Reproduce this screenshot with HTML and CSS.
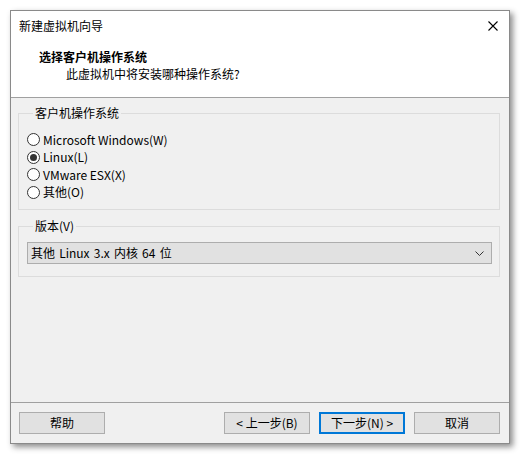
FILE: index.html
```html
<!DOCTYPE html>
<html lang="zh-CN">
<head>
<meta charset="utf-8">
<title>新建虚拟机向导</title>
<link rel="stylesheet" href="styles.css">
</head>
<body>
<div class="window">
  <div class="titlebar">
    <span class="title">新建虚拟机向导</span>
    <svg class="close" width="10" height="10" viewBox="0 0 10 10"><path d="M0.5 0.5 L9.5 9.5 M9.5 0.5 L0.5 9.5" stroke="#000" stroke-width="1.1" fill="none"/></svg>
  </div>
  <div class="header">
    <div class="heading">选择客户机操作系统</div>
    <div class="subtitle">此虚拟机中将安装哪种操作系统?</div>
  </div>
  <div class="body">
    <fieldset class="group group-os">
      <legend>客户机操作系统</legend>
      <div class="radio-row"><span class="radio"></span><span>Microsoft Windows(W)</span></div>
      <div class="radio-row"><span class="radio checked"></span><span>Linux(L)</span></div>
      <div class="radio-row"><span class="radio"></span><span>VMware ESX(X)</span></div>
      <div class="radio-row"><span class="radio"></span><span>其他(O)</span></div>
    </fieldset>
    <fieldset class="group group-ver">
      <legend>版本(V)</legend>
      <div class="select">
        <span class="select-text">其他 Linux 3.x 内核 64 位</span>
        <svg class="chev" width="9" height="5" viewBox="0 0 9 5"><path d="M0.5 0.5 L4.5 4.5 L8.5 0.5" stroke="#333" stroke-width="1" fill="none"/></svg>
      </div>
    </fieldset>
  </div>
  <div class="footer">
    <button class="btn">帮助</button>
    <span class="spacer"></span>
    <button class="btn">&lt; 上一步(B)</button>
    <button class="btn default">下一步(N) &gt;</button>
    <button class="btn">取消</button>
  </div>
</div>
</body>
</html>
```

FILE: styles.css
```css
html, body {
  margin: 0;
  background: #ffffff;
}
body {
  padding: 10px;
  font-family: "Noto Sans CJK SC", "Noto Sans", sans-serif;
  font-size: 12px;
  color: #000;
}
.window {
  width: 500px;
  height: 434px;
  box-sizing: border-box;
  border: 1px solid #8a8a8a;
  background: #fff;
  display: flex;
  flex-direction: column;
  box-shadow: 3px 3px 6px rgba(0, 0, 0, 0.45);
}
.titlebar {
  height: 30px;
  flex: none;
  display: flex;
  align-items: center;
  padding-left: 8px;
  padding-right: 11px;
}
.title {
  flex: 1;
  line-height: 16px;
}
.close {
  display: block;
}
.header {
  height: 56px;
  flex: none;
  border-bottom: 1px solid #a0a0a0;
  box-sizing: content-box;
  padding-left: 28px;
}
.heading {
  font-weight: bold;
  line-height: 16px;
  margin-top: 8px;
}
.subtitle {
  line-height: 16px;
  margin-left: 27px;
  margin-top: 1px;
}
.body {
  flex: 1;
  background: #f0f0f0;
  padding: 7px 9px 0 7px;
  display: flex;
  flex-direction: column;
}
.group {
  margin: 0;
  padding: 0;
  border: 1px solid #dcdcdc;
  min-width: 0;
}
.group legend {
  margin-left: 6px;
  padding: 0 2px;
  line-height: 16px;
}
.group-os {
  padding: 10px 0 8px 8px;
}
.radio-row {
  height: 17.5px;
  display: flex;
  align-items: center;
  line-height: 16px;
}
.radio {
  width: 13px;
  height: 13px;
  box-sizing: border-box;
  border: 1px solid #333;
  border-radius: 50%;
  background: #fff;
  margin-right: 3px;
  display: flex;
  align-items: center;
  justify-content: center;
  flex: none;
}
.radio.checked::after {
  content: "";
  width: 7px;
  height: 7px;
  border-radius: 50%;
  background: #333;
}
.group-ver {
  margin-top: 8px;
  padding: 8px 7px 12px 8px;
}
.select {
  height: 22px;
  box-sizing: border-box;
  border: 1px solid #adadad;
  background: #e1e1e1;
  display: flex;
  align-items: center;
  padding: 0 4px 0 3px;
  line-height: 16px;
}
.select-text {
  flex: 1;
  word-spacing: 1.5px;
}
.chev {
  display: block;
  margin-right: 3px;
}
.footer {
  flex: none;
  border-top: 1px solid #a0a0a0;
  background: #f0f0f0;
  display: flex;
  align-items: flex-start;
  padding: 9px 9px 0 8px;
  box-sizing: border-box;
  height: 41px;
}
.spacer {
  flex: 1;
}
.btn {
  width: 86px;
  height: 22px;
  box-sizing: border-box;
  border: 1px solid #adadad;
  background: #e1e1e1;
  font: inherit;
  color: #000;
  padding: 0;
  margin: 0 0 0 9px;
  line-height: 16px;
}
.btn:first-child {
  margin-left: 0;
}
.btn.default {
  border: 2px solid #0078d7;
}
```
